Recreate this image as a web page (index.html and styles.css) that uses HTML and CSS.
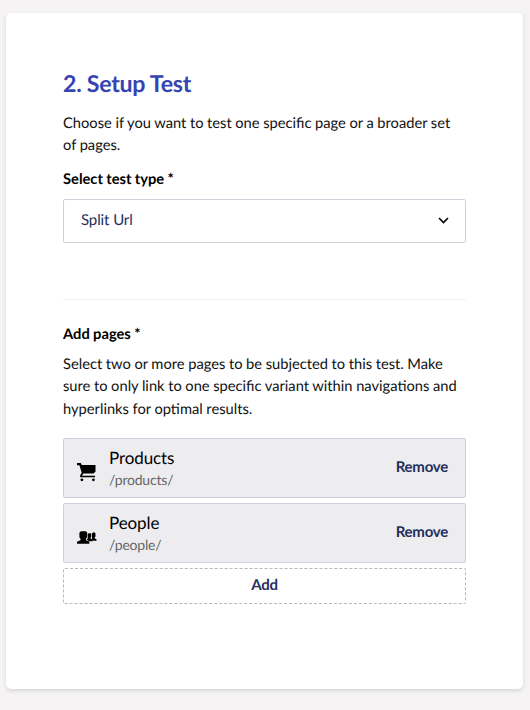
FILE: index.html
```html
<!DOCTYPE html>
<html lang="en">
<head>
<meta charset="utf-8">
<title>Setup Test</title>
<link rel="stylesheet" href="styles.css">
</head>
<body>
<main class="card">
  <h1 class="title">2. Setup Test</h1>
  <p class="text">Choose if you want to test one specific page or a broader set of pages.</p>
  <h2 class="label label-type">Select test type *</h2>
  <div class="select">
    <span>Split Url</span>
    <svg class="chevron" viewBox="0 0 11 7"><path d="M1 1l4.5 4.5L10 1"/></svg>
  </div>
  <hr class="divider">
  <h2 class="label">Add pages *</h2>
  <p class="text text-pages">Select two or more pages to be subjected to this test. Make sure to only link to one specific variant within navigations and hyperlinks for optimal results.</p>
  <div class="pages">
    <div class="page">
      <svg class="icon" viewBox="0 0 20 20"><path d="M0 1h3.8l1 2H18.5v6.7L16.5 11.5H6.2L5 13.7H18v1.6H3.2V13.2L4.7 10.7 2.4 3.2H0z"/><circle cx="4.9" cy="17.8" r="1.4"/><circle cx="16.4" cy="17.8" r="1.4"/></svg>
      <div class="info"><span class="name">Products</span><span class="path">/products/</span></div>
      <span class="action">Remove</span>
    </div>
    <div class="page">
      <svg class="icon" viewBox="0 0 20 20"><path d="M0 16.8v-2l3.5-1.6v-1.5L2.4 10.3V5.8L3.8 4.2h5l1.4 1.4v4.7L9 11.7v1.5l3.3 1.4v2.2z"/><path d="M10.7 7l1.1-.8h1.8l.7 1v2.4l-.7 1.2v.7l1.8 1v1.7h-3.2l-2.3-1.4v-.8l1-.6z"/><path d="M15 6.3l1-.7h1.7l.8 1v2.8l-.9 1.2v.7l1.9.9v1.5h-4.4v-2.1l-.1-.6z"/></svg>
      <div class="info"><span class="name">People</span><span class="path">/people/</span></div>
      <span class="action">Remove</span>
    </div>
    <div class="add">Add</div>
  </div>
</main>
</body>
</html>
```
FILE: styles.css
```css
* { box-sizing: border-box; }
body {
  margin: 0;
  padding: 13px 7px 21px 6px;
  height: 710px;
  background: #f5f3f4;
  color: #111;
  font: 15px/22.4px Lato, sans-serif;
  text-rendering: geometricPrecision;
}
.card {
  height: 676px;
  padding: 56px 57px;
  background: #fff;
  border-radius: 5px;
  box-shadow: 0 2px 4px rgba(0, 20, 10, .12);
}
h1, h2, p { margin: 0; }
.title { font-size: 23.2px; line-height: 28px; font-weight: 700; letter-spacing: -.28px; color: #3544b1; }
.text { height: 45px; margin-top: 15px; font-size: 14.7px; word-spacing: -.16px; }
.label { font-size: 14.7px; line-height: 22px; font-weight: 700; word-spacing: -.2px; color: #000; }
.label-type { margin-top: 11px; }
.select {
  display: flex;
  align-items: center;
  justify-content: space-between;
  height: 44px;
  margin-top: 9px;
  padding: 0 16px 1px 17px;
  border: 1px solid #d0d0dc;
  border-radius: 2px;
  color: #242e5c;
  letter-spacing: -.1px;
}
.chevron { width: 11px; height: 7px; fill: none; stroke: #000; stroke-width: 1.6; }
.divider { height: 1px; margin: 56px 0 23px; border: 0; background: #f2f2f3; }
.text-pages { height: 67px; margin-top: 8px; }
.pages { display: grid; gap: 5px; margin-top: 18px; }
.page {
  display: flex;
  align-items: center;
  height: 60px;
  padding: 0 17px 0 13px;
  border: 1px solid #d0d0dc;
  border-radius: 2px;
  background: #ededef;
}
.icon { width: 20px; height: 20px; margin-top: 8px; fill: #000; }
.info { display: flex; flex: 1; flex-direction: column; margin-left: 12px; padding-top: 1px; }
.name { font-size: 17px; line-height: 22px; letter-spacing: -.1px; color: #000; }
.path { font-size: 14px; line-height: 21px; letter-spacing: -.2px; color: #666; }
.action, .add { font-weight: 700; letter-spacing: -.25px; color: #242e5c; }
.action { margin-top: -2px; }
.add {
  height: 36px;
  border: 1px dashed #b8b8b8;
  border-radius: 2px;
  text-align: center;
  line-height: 32px;
}
```
